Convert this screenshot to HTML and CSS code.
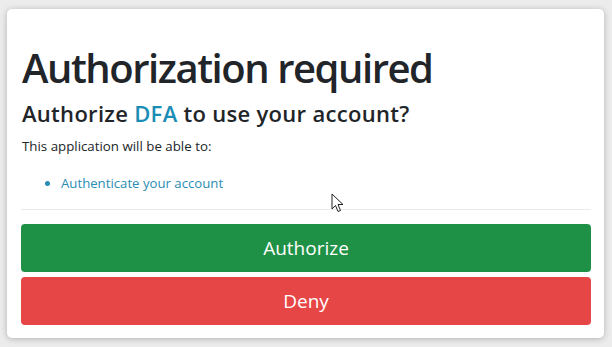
FILE: index.html
```html
<!DOCTYPE html>
<html lang="en">

<head>
    <meta charset="UTF-8">
    <meta name="viewport" content="width=device-width, initial-scale=1.0">
    <title>Authorization required</title>
    <link rel="stylesheet" href="styles.css">
</head>

<body>
    <main class="card">
        <h1 class="title">Authorization required</h1>
        <h2 class="subtitle">Authorize <span class="app-name">DFA</span> to use your account?</h2>
        <p class="intro">This application will be able to:</p>
        <ul class="scopes">
            <li>Authenticate your account</li>
        </ul>
        <hr class="divider">
        <div class="actions">
            <button class="btn btn-authorize">Authorize</button>
            <button class="btn btn-deny">Deny</button>
        </div>
        <svg class="cursor" width="14" height="21" viewBox="0 0 14 21">
            <path d="M1 1 L1 16 L4.5 12.5 L7 18.5 L9.5 17.5 L7 11.5 L12 11.5 Z" fill="#fff" stroke="#222" stroke-width="1" stroke-linejoin="round"/>
        </svg>
    </main>
</body>

</html>
```

FILE: styles.css
```css
body {
    margin: 0;
    background-color: #ececec;
    font-family: 'Open Sans', 'Noto Sans', sans-serif;
    color: #212529;
}

.card {
    position: relative;
    margin: 9px 8px 9px 7px;
    padding: 14px 13px 13px 14px;
    background-color: #fff;
    border-radius: 5px;
    box-shadow: 0 1px 6px rgba(0, 0, 0, 0.25);
}

.title {
    margin: 21px 0 0 1px;
    font-size: 40px;
    font-weight: 600;
    line-height: 48px;
    letter-spacing: -1.45px;
}

.subtitle {
    margin: 8px 0 0 1px;
    font-size: 22px;
    font-weight: 600;
    line-height: 26px;
    letter-spacing: 0.3px;
}

.app-name {
    color: #1a8db5;
}

.intro {
    margin: 10px 0 0 1px;
    font-size: 13.3px;
    line-height: 20px;
}

.scopes {
    margin: 17px 0 0;
    padding-left: 40px;
    font-size: 13.2px;
    line-height: 20px;
    color: #2a8db3;
}

.divider {
    margin: 16px 0 0;
    border: 0;
    border-top: 1px solid #e9e9ee;
}

.actions {
    display: flex;
    flex-direction: column;
    gap: 5px;
    margin-top: 14px;
}

.btn {
    height: 48px;
    border: 0;
    border-radius: 4px;
    color: #fff;
    font-family: 'Open Sans', 'Noto Sans', sans-serif;
    font-size: 19px;
    cursor: pointer;
}

.btn-authorize {
    background-color: #1f9146;
}

.btn-deny {
    background-color: #e74646;
}

.cursor {
    position: absolute;
    left: 324px;
    top: 184px;
}
```
